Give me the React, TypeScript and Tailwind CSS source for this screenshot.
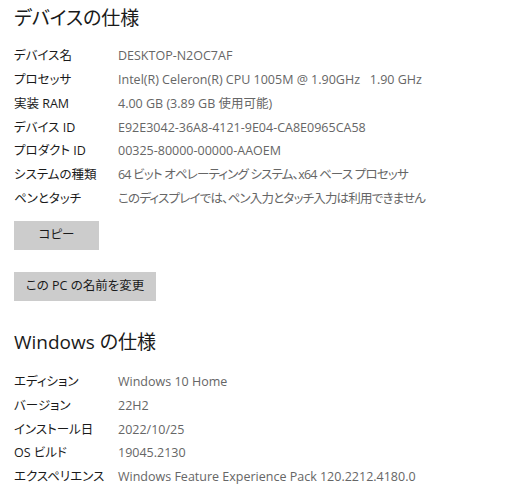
const jp = "font-['Segoe_UI','Open_Sans','Noto_Sans_CJK_JP',sans-serif] [font-feature-settings:'palt']";

// [label, value, 和文が多い値は字詰め]
const device: [string, string, boolean?][] = [
  ["デバイス名", "DESKTOP-N2OC7AF"],
  ["プロセッサ", "Intel(R) Celeron(R) CPU 1005M @ 1.90GHz   1.90 GHz"],
  ["実装 RAM", "4.00 GB (3.89 GB 使用可能)"],
  ["デバイス ID", "E92E3042-36A8-4121-9E04-CA8E0965CA58"],
  ["プロダクト ID", "00325-80000-00000-AAOEM"],
  ["システムの種類", "64 ビット オペレーティング システム、x64 ベース プロセッサ", true],
  ["ペンとタッチ", "このディスプレイでは、ペン入力とタッチ入力は利用できません", true],
];

const windows: [string, string, boolean?][] = [
  ["エディション", "Windows 10 Home"],
  ["バージョン", "22H2"],
  ["インストール日", "2022/10/25"],
  ["OS ビルド", "19045.2130"],
  ["エクスペリエンス", "Windows Feature Experience Pack 120.2212.4180.0"],
];

function SpecRows({ rows }: { rows: [string, string, boolean?][] }) {
  return (
    <div className="flex flex-col">
      {rows.map(([label, value, tight]) => (
        <div key={label} className="flex h-[23.7px] items-center text-[12.5px]">
          <div className="w-[104px] shrink-0 text-[#1a1a1a]">{label}</div>
          <div className={tight ? "whitespace-pre text-[#666666] tracking-[-0.8px]" : "whitespace-pre text-[#666666]"}>
            {value}
          </div>
        </div>
      ))}
    </div>
  );
}

export default function App() {
  return (
    <div className={`w-[512px] h-[485px] overflow-hidden bg-white pl-[14px] ${jp}`}>
      <h1 className="pt-[6px] text-[19px] leading-[24px] text-[#1a1a1a]">デバイスの仕様</h1>

      <div className="mt-[15px]">
        <SpecRows rows={device} />
      </div>

      <button className="mt-[10px] flex h-[29px] w-[85px] items-center justify-center bg-[#cccccc] text-[12.5px] text-[#1a1a1a]">
        コピー
      </button>

      <button className="mt-[22px] flex h-[29px] w-[142px] items-center justify-center bg-[#cccccc] text-[12.5px] text-[#1a1a1a]">
        この PC の名前を変更
      </button>

      <h2 className="mt-[29px] text-[19px] leading-[24px] text-[#1a1a1a]">Windows の仕様</h2>

      <div className="mt-[17px]">
        <SpecRows rows={windows} />
      </div>
    </div>
  );
}
